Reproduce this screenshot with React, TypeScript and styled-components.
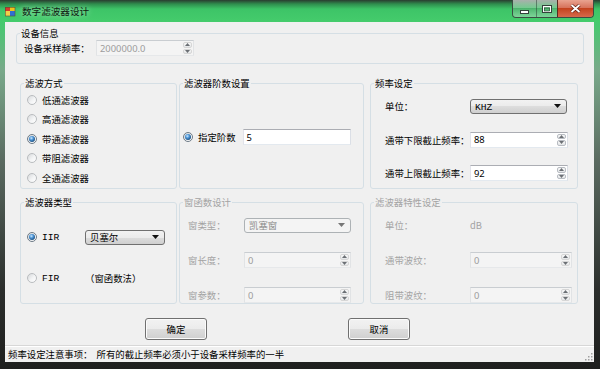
import React from 'react';
import styled, { createGlobalStyle } from 'styled-components';

const GlobalStyle = createGlobalStyle`
  html, body {
    margin: 0;
    padding: 0;
    width: 600px;
    height: 369px;
    overflow: hidden;
    background: #1d1f1e;
  }
  body {
    font-family: "Noto Sans CJK SC", "Noto Sans", sans-serif;
    font-size: 9.4px;
    color: #000;
  }
  * { box-sizing: border-box; }
`;

// Aero style window frame
const Frame = styled.div`
  width: 600px;
  height: 369px;
  display: flex;
  flex-direction: column;
  background: linear-gradient(180deg, #3fc567 0, #47c96f 24px, #79a98a 70px, #5b6b61 160px, #2b2e2c 290px, #1e1f1e 100%);
`;

const TitleBar = styled.div`
  height: 22px;
  flex: none;
  display: flex;
  align-items: center;
  padding-left: 5px;
  background: linear-gradient(180deg, #2a3d30 0, #2f8d4d 4px, #3dc467 9px, #45cc6c 100%);
`;

const Title = styled.span`
  margin-left: 6px;
  font-size: 9.6px;
  color: #101a12;
  text-shadow: 0 0 6px rgba(255, 255, 255, 0.7);
`;

const Caption = styled.div`
  align-self: flex-start;
  margin-left: auto;
  margin-right: 6px;
  display: flex;
  height: 18px;
  border: 1px solid #3b4d42;
  border-top: 0;
  border-radius: 0 0 4px 4px;
  overflow: hidden;
`;

const CapButton = styled.div<{ $w: number; $close?: boolean }>`
  width: ${p => p.$w}px;
  display: flex;
  align-items: center;
  justify-content: center;
  border-left: ${p => (p.$close ? '1px solid #5a2a20' : '1px solid rgba(40, 60, 50, 0.5)')};
  background: ${p =>
    p.$close
      ? 'linear-gradient(180deg, #e9a390 0, #d7735c 45%, #c4431f 50%, #d66a4b 100%)'
      : 'linear-gradient(180deg, rgba(255,255,255,0.6) 0, rgba(220,235,225,0.35) 48%, rgba(120,150,130,0.3) 50%, rgba(200,225,210,0.45) 100%)'};
  &:first-child { border-left: 0; }
`;

const Client = styled.div`
  flex: 1;
  margin: 0 6px 7px 5px;
  background: #f0f0f0;
  display: flex;
  flex-direction: column;
`;

const Group = styled.fieldset<{ $off?: boolean }>`
  margin: 0;
  padding: 0;
  min-width: 0;
  height: 100%;
  border: 1px solid #d5dfe5;
  border-radius: 3px;
  color: ${p => (p.$off ? '#a3a3a3' : '#000')};
`;

const Legend = styled.legend`
  margin-left: 3px;
  padding: 0 1px;
  height: 14px;
  line-height: 14px;
`;

const TopGroup = styled.div`
  height: 38px;
  margin: 4px 10px 0 11px;
`;

const Row = styled.div<{ $h: number; $top: number }>`
  height: ${p => p.$h}px;
  margin-top: ${p => p.$top}px;
  padding-left: 15px;
  display: grid;
  grid-template-columns: 157px 185px 212px;
  column-gap: 2px;
  & > :last-child { margin-left: 4px; }
`;

// label / control form grid inside a group
const Form = styled.div<{ $pl: number; $pt: number; $label: number; $gap: number }>`
  display: grid;
  grid-template-columns: ${p => p.$label}px auto;
  grid-auto-rows: 16px;
  row-gap: ${p => p.$gap}px;
  align-items: center;
  justify-items: start;
  padding: ${p => p.$pt}px 0 0 ${p => p.$pl}px;
`;

const Mono = styled.span`
  font-family: "Liberation Mono", "Noto Sans CJK SC", monospace;
  font-size: 9.6px;
`;

const TextBox = styled.div<{ $w: number; $off?: boolean }>`
  width: ${p => p.$w}px;
  height: 16px;
  display: flex;
  align-items: center;
  padding-left: 3px;
  border: 1px solid;
  border-color: ${p => (p.$off ? '#c9cdd1 #e1e3e5 #e6e8ea #e1e3e5' : '#abadb3 #dbdfe6 #e3e9ef #e2e3ea')};
  background: ${p => (p.$off ? '#f4f4f4' : '#fff')};
  color: ${p => (p.$off ? '#9d9d9d' : '#000')};
  font-family: "Noto Sans", "Noto Sans CJK SC", sans-serif;
  font-size: 9.4px;
`;

const Spin = styled.div`
  margin-left: auto;
  width: 10px;
  height: 100%;
  display: flex;
  flex-direction: column;
  padding: 1px 1px 1px 0;
  gap: 1px;
`;

const SpinButton = styled.div<{ $off?: boolean }>`
  flex: 1;
  display: flex;
  align-items: center;
  justify-content: center;
  border: 1px solid ${p => (p.$off ? '#d6d6d6' : '#b8bcc2')};
  border-radius: 2px;
  background: linear-gradient(180deg, #f9f9f9, #e4e6e8);
`;

const Combo = styled.div<{ $w: number; $off?: boolean }>`
  width: ${p => p.$w}px;
  height: 15px;
  display: flex;
  align-items: center;
  justify-content: space-between;
  padding: 0 5px 0 4px;
  border: 1px solid ${p => (p.$off ? '#adb2b5' : '#707070')};
  border-radius: 3px;
  background: ${p =>
    p.$off
      ? '#f4f4f4'
      : 'linear-gradient(180deg, #f2f2f2 0, #ebebeb 50%, #dddddd 50%, #cfcfcf 100%)'};
  color: ${p => (p.$off ? '#8a8a8a' : '#000')};
`;

const RadioList = styled.div`
  display: flex;
  flex-direction: column;
  padding-left: 6px;
`;

const RadioRow = styled.div<{ $h?: number }>`
  height: ${p => p.$h ?? 19.5}px;
  display: flex;
  align-items: center;
  gap: 5px;
`;

const RadioDot = styled.span<{ $on?: boolean }>`
  flex: none;
  position: relative;
  width: 10px;
  height: 10px;
  border-radius: 50%;
  border: 1px solid ${p => (p.$on ? '#6d7a86' : '#b9bcbf')};
  background: linear-gradient(135deg, #d7d9db 0, #f3f4f5 55%, #ffffff 100%);
  &::after {
    content: '';
    display: ${p => (p.$on ? 'block' : 'none')};
    position: absolute;
    left: 1px;
    top: 1px;
    width: 6px;
    height: 6px;
    border-radius: 50%;
    background: radial-gradient(circle at 40% 35%, #cfeaff 0, #4d95d6 35%, #1c4f80 75%, #173f66 100%);
  }
`;

const OrderBody = styled.div`
  display: flex;
  align-items: center;
  padding: 39px 0 0 3px;
`;

const OrderLabel = styled.span`
  margin-left: 5px;
  margin-right: 7px;
`;

const TypeForm = styled.div`
  display: grid;
  grid-template-columns: 58px 80px;
  grid-auto-rows: 16px;
  row-gap: 25px;
  align-items: center;
  padding: 20px 0 0 6px;
`;

const Buttons = styled.div`
  height: 22px;
  margin-top: 14px;
  padding-left: 140px;
  display: flex;
  gap: 141px;
`;

const Button = styled.div`
  width: 62px;
  height: 22px;
  display: flex;
  align-items: center;
  justify-content: center;
  border: 1px solid #707070;
  border-radius: 3px;
  box-shadow: inset 0 0 0 1px #fbfbfb;
  background: linear-gradient(180deg, #f2f2f2 0, #ebebeb 50%, #dddddd 50%, #cfcfcf 100%);
`;

const StatusBar = styled.div`
  margin-top: auto;
  height: 17px;
  display: flex;
  align-items: center;
  padding-left: 3px;
  border-top: 1px solid #d7d7d7;
  box-shadow: inset 0 1px 0 #ffffff;
  position: relative;
`;

const Grip = styled.svg`
  position: absolute;
  right: 1px;
  bottom: 1px;
`;

const Arrow = ({ up }: { up?: boolean }) => (
  <svg width="5" height="3" viewBox="0 0 5 3">
    <path d={up ? 'M0 3 L2.5 0 L5 3 Z' : 'M0 0 L2.5 3 L5 0 Z'} fill="#6b6f74" />
  </svg>
);

const Numeric = ({ value, w, off }: { value: string; w: number; off?: boolean }) => (
  <TextBox $w={w} $off={off}>
    {value}
    <Spin>
      <SpinButton $off={off}><Arrow up /></SpinButton>
      <SpinButton $off={off}><Arrow /></SpinButton>
    </Spin>
  </TextBox>
);

const Select = ({ children, w, off }: { children: React.ReactNode; w: number; off?: boolean }) => (
  <Combo $w={w} $off={off}>
    <span>{children}</span>
    <svg width="7" height="4" viewBox="0 0 7 4">
      <path d="M0 0 L7 0 L3.5 4 Z" fill={off ? '#777' : '#111'} />
    </svg>
  </Combo>
);

const AppIcon = () => (
  <svg width="11" height="11" viewBox="0 0 11 11">
    <rect x="0" y="1" width="5" height="4" fill="#d83a2a" />
    <rect x="5" y="1" width="5" height="4" fill="#f0c419" />
    <rect x="0" y="5" width="5" height="5" fill="#f2d04a" />
    <rect x="5" y="5" width="5" height="5" fill="#2f6fd0" />
    <rect x="0.5" y="1.5" width="9.5" height="8.5" fill="none" stroke="#5a4a3a" strokeWidth="0.6" />
  </svg>
);

export default function App() {
  return (
    <>
      <GlobalStyle />
      <Frame>
        <TitleBar>
          <AppIcon />
          <Title>数字滤波器设计</Title>
          <Caption>
            <CapButton $w={23}>
              <svg width="9" height="4" viewBox="0 0 9 4" style={{ marginTop: 6 }}>
                <rect x="0.5" y="0.5" width="8" height="3" fill="#fff" stroke="#33413a" />
              </svg>
            </CapButton>
            <CapButton $w={21}>
              <svg width="10" height="8" viewBox="0 0 10 8">
                <rect x="0.5" y="0.5" width="9" height="7" fill="none" stroke="#33413a" />
                <rect x="1.5" y="1.5" width="7" height="5" fill="none" stroke="#fff" />
                <rect x="2.5" y="3" width="5" height="3" fill="none" stroke="#33413a" strokeWidth="0.6" />
              </svg>
            </CapButton>
            <CapButton $w={36} $close>
              <svg width="11" height="9" viewBox="0 0 11 9">
                <path d="M1.5 1 L9.5 8 M9.5 1 L1.5 8" stroke="#5a1c10" strokeWidth="3.2" />
                <path d="M1.5 1 L9.5 8 M9.5 1 L1.5 8" stroke="#fff" strokeWidth="1.8" />
              </svg>
            </CapButton>
          </Caption>
        </TitleBar>

        <Client>
          <TopGroup>
            <Group>
              <Legend>设备信息</Legend>
              <Form $pl={7} $pt={0} $label={72} $gap={0}>
                <span>设备采样频率：</span>
                <Numeric value="2000000.0" w={98} off />
              </Form>
            </Group>
          </TopGroup>

          <Row $h={112} $top={12}>
            <Group>
              <Legend>滤波方式</Legend>
              <RadioList>
                <RadioRow><RadioDot />低通滤波器</RadioRow>
                <RadioRow><RadioDot />高通滤波器</RadioRow>
                <RadioRow><RadioDot $on />带通滤波器</RadioRow>
                <RadioRow><RadioDot />带阻滤波器</RadioRow>
                <RadioRow><RadioDot />全通滤波器</RadioRow>
              </RadioList>
            </Group>
            <Group>
              <Legend>滤波器阶数设置</Legend>
              <OrderBody>
                <RadioDot $on />
                <OrderLabel>指定阶数</OrderLabel>
                <TextBox $w={108}>5</TextBox>
              </OrderBody>
            </Group>
            <Group>
              <Legend>频率设定</Legend>
              <Form $pl={14} $pt={8} $label={85} $gap={17.5}>
                <span>单位：</span>
                <Select w={97}><Mono>KHZ</Mono></Select>
                <span>通带下限截止频率：</span>
                <Numeric value="88" w={98} />
                <span>通带上限截止频率：</span>
                <Numeric value="92" w={98} />
              </Form>
            </Group>
          </Row>

          <Row $h={109} $top={7}>
            <Group>
              <Legend>滤波器类型</Legend>
              <TypeForm>
                <RadioRow $h={16}><RadioDot $on /><Mono>IIR</Mono></RadioRow>
                <Select w={80}>贝塞尔</Select>
                <RadioRow $h={16}><RadioDot /><Mono>FIR</Mono></RadioRow>
                <span>（窗函数法）</span>
              </TypeForm>
            </Group>
            <Group $off>
              <Legend>窗函数设计</Legend>
              <Form $pl={8} $pt={8} $label={56} $gap={19}>
                <span>窗类型：</span>
                <Select w={107} off>凯塞窗</Select>
                <span>窗长度：</span>
                <Numeric value="0" w={107} off />
                <span>窗参数：</span>
                <Numeric value="0" w={107} off />
              </Form>
            </Group>
            <Group $off>
              <Legend>滤波器特性设定</Legend>
              <Form $pl={14} $pt={8} $label={85} $gap={19}>
                <span>单位：</span>
                <span>dB</span>
                <span>通带波纹：</span>
                <Numeric value="0" w={102} off />
                <span>阻带波纹：</span>
                <Numeric value="0" w={102} off />
              </Form>
            </Group>
          </Row>

          <Buttons>
            <Button>确定</Button>
            <Button>取消</Button>
          </Buttons>

          <StatusBar>
            频率设定注意事项：&nbsp;&nbsp;所有的截止频率必须小于设备采样频率的一半
            <Grip width="9" height="9" viewBox="0 0 9 9">
              {[[7, 1], [7, 4], [4, 4], [7, 7], [4, 7], [1, 7]].map(([x, y]) => (
                <rect key={`${x}-${y}`} x={x} y={y} width="1.5" height="1.5" fill="#a0a0a0" />
              ))}
            </Grip>
          </StatusBar>
        </Client>
      </Frame>
    </>
  );
}
